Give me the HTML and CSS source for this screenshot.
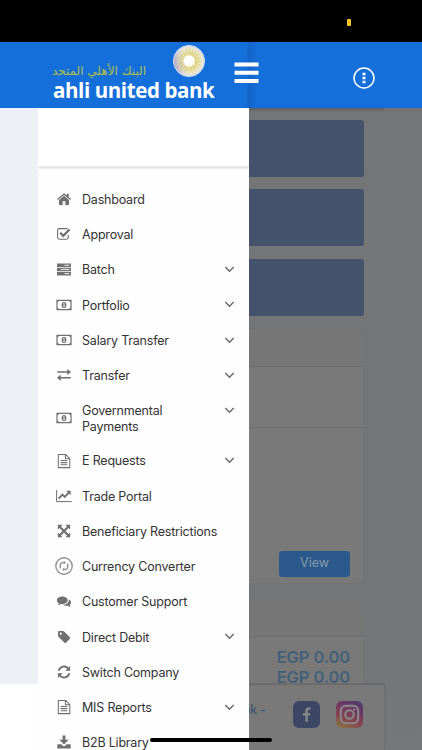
FILE: index.html
```html
<!DOCTYPE html>
<html lang="en">
<head>
<meta charset="utf-8">
<title>ahli united bank</title>
<link rel="stylesheet" href="styles.css">
</head>
<body>
<svg class="defs" width="0" height="0">
  <symbol id="home" viewBox="0 0 18 18"><path d="M2 9.1 9 3.2l2.8 2.3V3.8h2v3.4L16 9.1l-.8.9L9 4.9 2.8 10z"/><path d="M4 9.9 9 5.8l5 4.1V15h-3.700v-3.800H7.700V15H4z"/></symbol>
  <symbol id="check" viewBox="0 0 18 18"><path d="M12.500 3.600H4.200a1.600 1.600 0 0 0-1.600 1.600v7.400a1.600 1.600 0 0 0 1.600 1.600h7.400a1.600 1.600 0 0 0 1.600-1.600V10" fill="none" stroke="currentColor" stroke-width="1.100"/><path d="m5.200 7.800 3 3 6.300-6.300" fill="none" stroke="currentColor" stroke-width="2.300"/></symbol>
  <symbol id="server" viewBox="0 0 18 18"><path d="M2 2.500h14v3.500H2zm0 4.200h14v3.500H2zm0 4.200h14v3.500H2z"/><path d="M9.500 4.250h4.800M5.800 8.450h8.500M9.500 12.650h4.800" stroke="#fff" stroke-width=".9"/></symbol>
  <symbol id="money" viewBox="0 0 18 18"><path d="M2 4.400h14v9.200H2z" fill="none" stroke="currentColor" stroke-width="1.200"/><path d="M2 4.400h2.600L2 6.800zm14 0v2.400l-2.600-2.400zM2 13.600v-2.400l2.600 2.400zm14 0h-2.600l2.600-2.400z"/><ellipse cx="9" cy="9" rx="2.400" ry="3.100"/><path d="m8.200 7.900.9-.6v3.300m-1 0h2" fill="none" stroke="#fff" stroke-width=".8"/></symbol>
  <symbol id="exchange" viewBox="0 0 18 18"><path d="M2.200 6h11M4.800 11.800h11" stroke="currentColor" stroke-width="1.600"/><path d="m12.300 2.900 3.800 3.100-3.800 3.100zM5.700 8.700 1.900 11.800l3.800 3.100z"/></symbol>
  <symbol id="file" viewBox="0 0 18 18"><path d="M3.300 2.400h7.300l4.200 4.200v9H3.300zM10.400 2.400v4.400h4.400M5.600 8.400h6.700M5.600 10.600h6.700M5.600 12.800h6.700" fill="none" stroke="currentColor" stroke-width="1.050" stroke-linejoin="round"/></symbol>
  <symbol id="chart" viewBox="0 0 18 18"><path d="M1.600 3v11.600h15.200" fill="none" stroke="currentColor"/><path d="m3.500 11.700 4-4 2.200 2.200 4.100-4.300" fill="none" stroke="currentColor" stroke-width="1.900"/><path d="M11.200 3.800h4.400v4.400z"/></symbol>
  <symbol id="expand" viewBox="0 0 18 18"><path d="m4 4 10 10M14 4 4 14" stroke="currentColor" stroke-width="2.200"/><path d="M2.800 2.800h4.800L2.800 7.600zm12.400 0v4.800l-4.800-4.800zM2.800 15.200v-4.800l4.800 4.800zm12.400 0h-4.800l4.800-4.800z"/></symbol>
  <symbol id="currency" viewBox="0 0 18 18"><g fill="none" stroke="#929292" stroke-width="1.400"><circle cx="9" cy="9" r="8.200"/><path d="M5.300 11.400V8a2.400 2.400 0 0 1 2.400-2.400h1.400M12.700 6.600V10a2.400 2.400 0 0 1-2.400 2.400H8.900"/></g><path fill="#929292" d="M8.700 3.800 11 5.600 8.700 7.500zM9.300 10.500v3.800L7 12.400z"/></symbol>
  <symbol id="chat" viewBox="0 0 18 18"><path d="M13.900 6.500c1.300.7 2.200 1.800 2.200 3 0 1-.6 1.900-1.500 2.500.2.800.7 1.300 1.200 1.900-1.400-.1-2.300-.5-3.100-1.100-1.700.2-3.500-.1-4.700-1 3.500 0 6-2.100 5.900-5.300z"/><path d="M7.300 3.400c3 0 5.400 1.700 5.400 3.800S10.300 11 7.300 11q-.8 0-1.400-.1c-.9.7-1.900 1.100-3.100 1.200.5-.5.9-1 1-1.800C2.700 9.600 1.900 8.500 1.900 7.200c0-2.100 2.400-3.800 5.400-3.800z"/></symbol>
  <symbol id="tag" viewBox="0 0 18 18"><path fill-rule="evenodd" d="M3 3.900q0-1 1-1h3.800q.7 0 1.300.6l5.800 5.800q.7.700 0 1.400l-4 4q-.7.700-1.400 0L3.700 8.900Q3 8.300 3 7.600zm2.800.7a1.100 1.100 0 1 0 0 2.200 1.100 1.100 0 0 0 0-2.200z"/></symbol>
  <symbol id="refresh" viewBox="0 0 18 18"><path d="M3.700 7.800A5.500 5.500 0 0 1 13.300 5.500M14.300 10.200A5.500 5.500 0 0 1 4.700 12.500" fill="none" stroke="currentColor" stroke-width="1.800"/><path d="M15.100 2.900v4.800h-4.800zM2.900 15.100v-4.800h4.800z"/></symbol>
  <symbol id="download" viewBox="0 0 18 18"><path d="M7.500 1.500h3v4.300h3.200L9 10.500 4.300 5.800h3.200z"/><path d="M2.300 10.200h4l1.500 1.500q1.200.9 2.400 0l1.500-1.500h4v4.200H2.300z"/></symbol>
  <symbol id="chev" viewBox="0 0 10 6"><path d="m1.200.8 3.800 3.800L8.800.8" fill="none" stroke="currentColor" stroke-width="1.200"/></symbol>
</svg>

<div class="status"><span class="mic"></span></div>

<header class="bar">
  <div class="logo">
    <div class="logo-top">
      <span class="arabic" lang="ar" dir="rtl">البنك الأهلي المتحد</span>
      <svg class="orb" viewBox="0 0 34 34">
        <defs><radialGradient id="g"><stop offset="0" stop-color="#fff"/><stop offset=".3" stop-color="#fffef0"/><stop offset=".45" stop-color="#e2d98e"/><stop offset=".72" stop-color="#ece7bd"/><stop offset=".9" stop-color="#e6e4de"/><stop offset="1" stop-color="#c9c3de"/></radialGradient>
        <linearGradient id="h" x1="0" y1=".6" x2="1" y2=".4"><stop offset="0" stop-color="#8b78b5" stop-opacity=".65"/><stop offset=".5" stop-color="#fff" stop-opacity="0"/></linearGradient></defs>
        <circle cx="17" cy="17" r="15.500" fill="url(#g)"/><circle cx="17" cy="17" r="15.500" fill="url(#h)" stroke="#d8e7fa"/>
        <circle cx="17" cy="17" r="9" fill="none" stroke="#c4b650" stroke-width="7" stroke-dasharray=".7 2.100" opacity=".4"/>
        <circle cx="17" cy="16.500" r="4.800" fill="#fff"/>
      </svg>
    </div>
    <div class="brand">ahli united bank</div>
  </div>
  <svg class="burger" viewBox="0 0 25 22"><path d="M.5 2.600h24M.5 10.800h24M.5 19h24" stroke="#fff" stroke-width="4"/></svg>
  <svg class="more" viewBox="0 0 24 24"><circle cx="12" cy="12" r="10" fill="none" stroke="#fff" stroke-width="1.500"/><path d="M10.500 6.800h3v2.500h-3zm0 4h3v2.500h-3zm0 4h3v2.500h-3z" fill="#fff"/></svg>
</header>

<main class="page">
  <div class="gutter"></div>
  <aside class="drawer">
    <div class="profile"></div>
    <nav>
      <a class="row"><svg><use href="#home"/></svg><span>Dashboard</span></a>
      <a class="row"><svg><use href="#check"/></svg><span>Approval</span></a>
      <a class="row"><svg><use href="#server"/></svg><span>Batch</span><svg class="chev"><use href="#chev"/></svg></a>
      <a class="row"><svg><use href="#money"/></svg><span>Portfolio</span><svg class="chev"><use href="#chev"/></svg></a>
      <a class="row"><svg><use href="#money"/></svg><span>Salary Transfer</span><svg class="chev"><use href="#chev"/></svg></a>
      <a class="row"><svg><use href="#exchange"/></svg><span>Transfer</span><svg class="chev"><use href="#chev"/></svg></a>
      <a class="row tall"><svg><use href="#money"/></svg><span>Governmental<br>Payments</span><svg class="chev"><use href="#chev"/></svg></a>
      <a class="row"><svg><use href="#file"/></svg><span>E Requests</span><svg class="chev"><use href="#chev"/></svg></a>
      <a class="row"><svg><use href="#chart"/></svg><span>Trade Portal</span></a>
      <a class="row"><svg><use href="#expand"/></svg><span>Beneficiary Restrictions</span></a>
      <a class="row"><svg><use href="#currency"/></svg><span>Currency Converter</span></a>
      <a class="row"><svg><use href="#chat"/></svg><span>Customer Support</span></a>
      <a class="row"><svg><use href="#tag"/></svg><span>Direct Debit</span><svg class="chev"><use href="#chev"/></svg></a>
      <a class="row"><svg><use href="#refresh"/></svg><span>Switch Company</span></a>
      <a class="row"><svg><use href="#file"/></svg><span>MIS Reports</span><svg class="chev"><use href="#chev"/></svg></a>
      <a class="row"><svg><use href="#download"/></svg><span>B2B Library</span></a>
    </nav>
  </aside>
  <section class="behind">
    <div class="content">
      <div class="tile"></div>
      <div class="tile"></div>
      <div class="tile"></div>
      <div class="card first">
        <div class="card-head"></div>
        <div class="card-sub"></div>
        <div class="card-body"><span class="view">View</span></div>
      </div>
      <div class="card second">
        <div class="card-head"></div>
        <div class="totals">EGP 0.00<br>EGP 0.00</div>
      </div>
    </div>
    <footer>
      <span class="copy">nk -</span>
      <svg class="social" viewBox="0 0 27 27"><rect width="27" height="27" rx="6" fill="#3b4765"/><path d="M17.500 7.500h-1.600c-1.500 0-2.300.9-2.300 2.400v10.900M9.800 13.200h7.200" fill="none" stroke="#858789" stroke-width="2.500"/></svg>
      <svg class="social" viewBox="0 0 27 27"><defs><linearGradient id="ig" x1=".25" y1="1" x2=".7" y2="0"><stop offset="0" stop-color="#8a7048"/><stop offset=".35" stop-color="#85434f"/><stop offset=".7" stop-color="#703763"/><stop offset="1" stop-color="#513a69"/></linearGradient></defs><rect width="27" height="27" rx="6" fill="url(#ig)"/><g fill="none" stroke="#8b898b" stroke-width="2"><rect x="4.800" y="4.800" width="17.400" height="17.400" rx="5"/><circle cx="13.500" cy="13.500" r="4.200"/></g><circle cx="18.400" cy="8.600" r="1.200" fill="#8b898b"/></svg>
    </footer>
  </section>
</main>
<div class="indicator"></div>
</body>
</html>
```
FILE: styles.css
```css
* { box-sizing: border-box; }
body {
  margin: 0;
  width: 422px;
  height: 750px;
  overflow: hidden;
  position: relative;
  display: flex;
  flex-direction: column;
  font-family: Inter, "Liberation Sans", sans-serif;
  background: #fff;
}
.defs { display: none; }
.status {
  height: 42px;
  flex: none;
  background: #000;
  display: flex;
  justify-content: flex-end;
  padding: 19px 71px 0 0;
}
.mic { width: 4px; height: 7px; border-radius: 1px; background: #f5c525; }

.bar {
  height: 66px;
  flex: none;
  display: flex;
  align-items: flex-start;
  padding-left: 53px;
  background: linear-gradient(90deg, transparent 246px, rgba(0, 20, 70, .12) 249px, transparent 258px), #156fdb;
}
.logo { width: 163px; white-space: nowrap; }
.logo-top { display: flex; height: 38px; }
.arabic {
  width: 93px;
  padding-top: 21px;
  font: 12px/16px "DejaVu Sans", sans-serif;
  color: #b4c142;
}
.orb { width: 34px; height: 34px; margin: 2px 0 0 26px; flex: none; }
.brand {
  font: 700 20.500px/20px "Open Sans", sans-serif;
  letter-spacing: -.4px;
  color: #fff;
}
.burger { width: 25px; height: 22px; margin: 20px 0 0 18px; }
.more { width: 24px; height: 24px; margin: 24px 0 0 93px; }

.page {
  flex: 1;
  min-height: 0;
  display: grid;
  grid-template-columns: 38px 211px 173px;
  grid-template-rows: 642px;
}
.gutter { height: 576px; background: #edf0f6; }
.drawer { background: #fefefe; overflow: hidden; }
.profile { height: 59px; background: #fff; border-bottom: 1px solid #e8e8e8; box-shadow: 0 1px 3px rgba(0, 0, 0, .16); }
nav { padding-top: 14.500px; }
.row {
  height: 35.250px;
  display: flex;
  align-items: center;
  padding: 0 14px 0 17px;
  font-size: 12.500px;
  letter-spacing: -.2px;
  line-height: 16px;
  color: #333;
  white-space: nowrap;
}
.row span { padding-top: 1.600px; }
.row svg { width: 18px; height: 18px; flex: none; margin-right: 9px; color: #707070; fill: currentColor; }
.row .chev { width: 11px; height: 7px; margin: 0 0 0 auto; color: #666; }
.tall { height: 50px; }
.tall .chev { align-self: flex-start; margin-top: 14px; }

.behind {
  background: linear-gradient(#747577, #747577 74%, #76777a);
  display: flex;
  flex-direction: column;
  overflow: hidden;
}
.content {
  height: 577px;
  flex: none;
  padding: 12px 58px 0 0;
  background: linear-gradient(rgba(0, 0, 0, .18), transparent 4px) 0 0 / 135px 4px no-repeat;
}
.tile { height: 57px; margin-bottom: 12.300px; border-radius: 0 3px 3px 0; background: #44536b; }
.card { background: #797979; border: 1px solid #727375; border-left: 0; border-radius: 0 3px 3px 0; }
.card-head { height: 38px; background: #767676; border-bottom: 1px solid #6c6d6e; }
.first { height: 256px; margin-bottom: 14px; display: flex; flex-direction: column; }
.card-sub { height: 61px; flex: none; border-bottom: 1px solid #6b6c6d; }
.card-body { flex: 1; display: flex; align-items: flex-end; justify-content: flex-end; padding: 0 13px 6px 0; }
.view {
  width: 71px;
  height: 26px;
  border-radius: 3px;
  background: #2c598b;
  color: #8599ac;
  font-size: 12.500px;
  line-height: 24px;
  text-align: center;
}
.second { height: 87px; border-bottom: 0; }
.totals {
  padding: 10px 13px 0 0;
  text-align: right;
  font-size: 16.500px;
  letter-spacing: -.1px;
  font-weight: 600;
  line-height: 20px;
  color: #446078;
}
footer {
  flex: 1;
  width: 135px;
  display: flex;
  align-items: flex-start;
  background: #797979;
  box-shadow: 0 -1px 2px rgba(0, 0, 0, .2);
}
.copy { width: 50px; margin-left: -6px; padding-top: 16px; font-size: 12.500px; letter-spacing: -.2px; line-height: 18px; color: #35506f; }
.social { width: 27px; height: 27px; margin-top: 16px; flex: none; }
.social + .social { margin-left: 16px; }
.indicator {
  position: absolute;
  left: 150px;
  top: 738px;
  width: 122px;
  height: 4px;
  border-radius: 2px;
  background: #000;
}
```
